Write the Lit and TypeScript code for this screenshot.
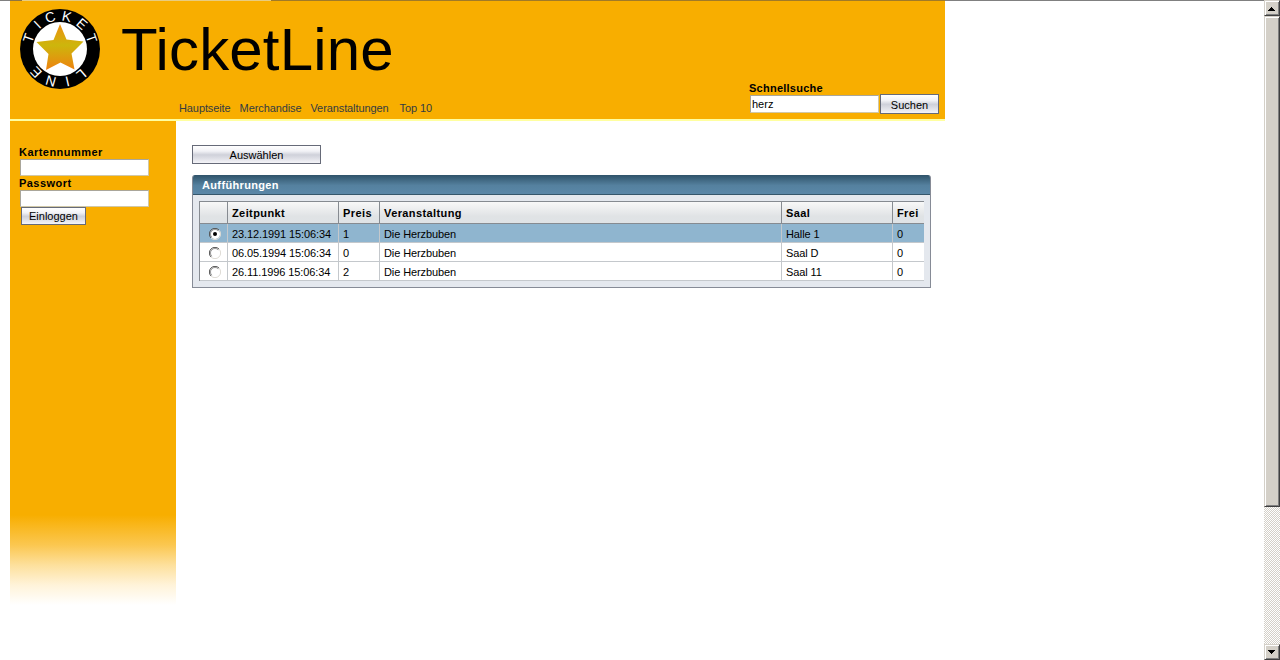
import { LitElement, html, css, svg } from "lit";
import { customElement, property, state } from "lit/decorators.js";

@customElement("ticket-logo")
class TicketLogo extends LitElement {
  static styles = css`
    :host { display: block; width: 82px; height: 82px; }
    svg { display: block; }
    text { font-family: "Liberation Sans", Arial, sans-serif; font-size: 14px; fill: #fff; text-anchor: middle; }
  `;
  private letters: [string, number][] = [
    ["T", -71], ["I", -43], ["C", -17], ["K", 12], ["E", 41], ["T", 71],
    ["L", 140], ["I", 167], ["N", 196], ["E", 226],
  ];
  render() {
    return html`<svg width="82" height="82" viewBox="19 8 82 82">
      <defs><linearGradient id="star" x1="0" y1="0" x2="0" y2="1">
        <stop offset="0" stop-color="#ee8f10"/><stop offset=".46" stop-color="#cdb60c"/>
        <stop offset="1" stop-color="#ee8210"/>
      </linearGradient></defs>
      <circle cx="60" cy="49" r="40" fill="#000"/>
      <circle cx="60" cy="49" r="27" fill="#fff"/>
      <path fill="url(#star)" d="M60 24L66.500 39.500L83.500 41.500L71.500 53.500L74.500 69.500L60.500 62.500L46 70L48.500 54L36.500 42L53.500 40Z"/>
      ${this.letters.map(([c, a]) => svg`<text x="60" y="20.500" transform="rotate(${a} 60 49)">${c}</text>`)}
    </svg>`;
  }
}

@customElement("push-button")
class PushButton extends LitElement {
  @property() label = "";
  static styles = css`
    :host { display: inline-block; height: 20px; }
    button {
      display: block; width: 100%; height: 100%; padding: 0; box-sizing: border-box;
      border: 1px solid #666a78; border-radius: 0; color: #000;
      font: 11px/16px "Liberation Sans", Arial, sans-serif;
      background: linear-gradient(#fff 0%, #f2f2f6 30%, #cfd1da 52%, #dcdde4 70%, #f4f4f8 100%);
    }
    :host(.suchen) button { padding-top: 2px; }
  `;
  render() { return html`<button>${this.label}</button>`; }
}

@customElement("scroll-rail")
class ScrollRail extends LitElement {
  static styles = css`
    :host { display: flex; flex-direction: column; width: 16px; height: 660px;
      background: repeating-conic-gradient(#d4d0c8 0 25%, #fff 0 50%) 0 0 / 2px 2px; }
    .box { box-sizing: border-box; height: 16px; background: #d4d0c8; border: 1px solid;
      border-color: #d4d0c8 #404040 #404040 #d4d0c8;
      box-shadow: inset 1px 1px #fff, inset -1px -1px #808080; }
    .thumb { height: 491px; }
    .down { margin-top: auto; }
    svg { display: block; }
  `;
  render() {
    return html`
      <div class="box"><svg width="14" height="14" shape-rendering="crispEdges"><path d="M6 6h1v1h1v1h1v1h1v1H3V9h1V8h1V7h1z"/></svg></div>
      <div class="box thumb"></div>
      <div class="box down"><svg width="14" height="14" shape-rendering="crispEdges"><path d="M3 5h7v1H9v1H8v1H7v1H6V8H5V7H4V6H3z"/></svg></div>`;
  }
}

interface Show { time: string; price: number; event: string; hall: string; free: number; }

@customElement("app-root")
class AppRoot extends LitElement {
  @state() private selected = 0;
  private shows: Show[] = [
    { time: "23.12.1991 15:06:34", price: 1, event: "Die Herzbuben", hall: "Halle 1", free: 0 },
    { time: "06.05.1994 15:06:34", price: 0, event: "Die Herzbuben", hall: "Saal D", free: 0 },
    { time: "26.11.1996 15:06:34", price: 2, event: "Die Herzbuben", hall: "Saal 11", free: 0 },
  ];
  static styles = css`
    :host { display: flex; width: 1280px; height: 660px; overflow: hidden; background: #fff;
      font: 11px/13px "Liberation Sans", Arial, sans-serif; color: #000; }
    .view { flex: 1; min-width: 0; }
    .edge { height: 1px; background: linear-gradient(90deg, #808080 10px, #8f7440 10px 22px, #e8cc80 22px 271px, #a07a28 271px 945px, #808080 945px); }
    .page { width: 935px; margin-left: 10px; }
    header { display: flex; height: 118px; background: #f8ae00; border-bottom: 2px solid #ffffa0; }
    ticket-logo { margin: 7px 0 0 9px; }
    .brand { display: flex; flex-direction: column; margin-left: 20px; flex: 1; }
    h1 { margin: 15px 0 0; font-size: 60px; line-height: 68px; font-weight: 400; letter-spacing: .15px; }
    nav { display: flex; gap: 9px; margin: 18px 0 0 58px; color: #333b42; white-space: nowrap; letter-spacing: -.1px; }
    nav span:last-child { margin-left: 2px; }
    .search { width: 196px; padding-top: 81px; }
    .row { display: flex; align-items: center; gap: 1px; margin-top: -1px; }
    input.field { display: block; box-sizing: border-box; width: 129px; height: 18px; margin: 0 0 0 1px; padding: 0 1px;
      border: 1px solid; border-color: #aaa69a #d0c8a8 #d0c8a8 #aaa69a; border-radius: 0; background: #fff;
      font: inherit; color: #000; outline: none; }
    .suchen { width: 59px; }
    .body { display: flex; }
    aside { box-sizing: border-box; width: 166px; height: 484px; padding: 25px 0 0 9px;
      background: linear-gradient(#f8ae00 0 394px, #fbc750 424px, #fde09c 444px, #fff3d9 464px, #fff 484px); }
    b { display: block; letter-spacing: .46px; }
    .search b { letter-spacing: .25px; }
    aside input.field { height: 17px; margin-bottom: 1px; }
    aside input.last { margin-bottom: 0; }
    .login { display: block; width: 66px; height: 18px; margin-left: 2px; width: 65px; }
    main { width: 739px; margin: 24px 0 0 16px; }
    .choose { display: block; width: 129px; height: 19px; }
    .panel { box-sizing: border-box; margin-top: 11px; height: 113px; border: 1px solid #868b96; border-top: 0;
      border-radius: 3px 3px 0 0; background: #e4e8ee; overflow: hidden; }
    .title { margin: 0 -1px; height: 19px; padding-left: 10px; border-bottom: 1px solid #35566b;
      background: linear-gradient(#2f536a, #55819f 55%, #5a87a8); color: #fff; font-weight: 700; line-height: 20px; letter-spacing: .35px; }
    .grid { box-sizing: border-box; width: 725px; margin: 6px 0 0 6px; border-top: 1px solid #868b91; border-left: 1px solid #868b91; }
    .line { display: grid; grid-template-columns: 28px 111px 41px 402px 111px 31px; background: #fff; }
    .line > span { box-sizing: border-box; height: 19px; line-height: 21px; padding-left: 4px; white-space: nowrap;
      border-right: 1px solid #c4c8cc; border-bottom: 1px solid #c4c8cc; letter-spacing: -.1px; }
    .line > span:last-child { border-right: 0; }
    .line.head { background: linear-gradient(#f8f8f8, #e0e3e5 65%, #dfe3e6); font-weight: 700; }
    .line.head > span { height: 22px; line-height: 23px; border-color: #868b91; letter-spacing: .4px; }
    .line.picked { background: #8fb5cf; }
    .line > .radio { padding: 4px 0 0 9px; cursor: default; }
    .radio svg { display: block; }
  `;
  private radio(on: boolean) {
    return html`<svg width="12" height="12" viewBox="0 0 12 12">
      <circle cx="6" cy="6" r="5" fill="#fff"/>
      <path d="M10 2A5.500 5.500 0 0 1 2 10" fill="none" stroke="#dedbd5"/>
      <path d="M2 10A5.500 5.500 0 0 1 10 2" fill="none" stroke="#555"/>
      <path d="M2.800 9.200A4.500 4.500 0 0 1 9.200 2.800" fill="none" stroke="#505050" stroke-width=".6"/>
      ${on ? svg`<circle cx="6" cy="6" r="2" fill="#000"/>` : ""}
    </svg>`;
  }
  render() {
    return html`
      <div class="view">
        <div class="edge"></div>
        <div class="page">
          <header>
            <ticket-logo></ticket-logo>
            <div class="brand">
              <h1>TicketLine</h1>
              <nav><span>Hauptseite</span><span>Merchandise</span><span>Veranstaltungen</span><span>Top 10</span></nav>
            </div>
            <div class="search">
              <b>Schnellsuche</b>
              <div class="row"><input class="field" .value=${"herz"}><push-button class="suchen" label="Suchen"></push-button></div>
            </div>
          </header>
          <div class="body">
            <aside>
              <b>Kartennummer</b><input class="field">
              <b>Passwort</b><input class="field last" type="password">
              <push-button class="login" label="Einloggen"></push-button>
            </aside>
            <main>
              <push-button class="choose" label="Auswählen"></push-button>
              <section class="panel">
                <div class="title">Aufführungen</div>
                <div class="grid">
                  <div class="line head"><span></span><span>Zeitpunkt</span><span>Preis</span><span>Veranstaltung</span><span>Saal</span><span>Frei</span></div>
                  ${this.shows.map((s, i) => html`
                    <div class="line ${i === this.selected ? "picked" : ""}" @click=${() => (this.selected = i)}>
                      <span class="radio">${this.radio(i === this.selected)}</span><span>${s.time}</span><span>${s.price}</span><span>${s.event}</span><span>${s.hall}</span><span>${s.free}</span>
                    </div>`)}
                </div>
              </section>
            </main>
          </div>
        </div>
      </div>
      <scroll-rail></scroll-rail>`;
  }
}
